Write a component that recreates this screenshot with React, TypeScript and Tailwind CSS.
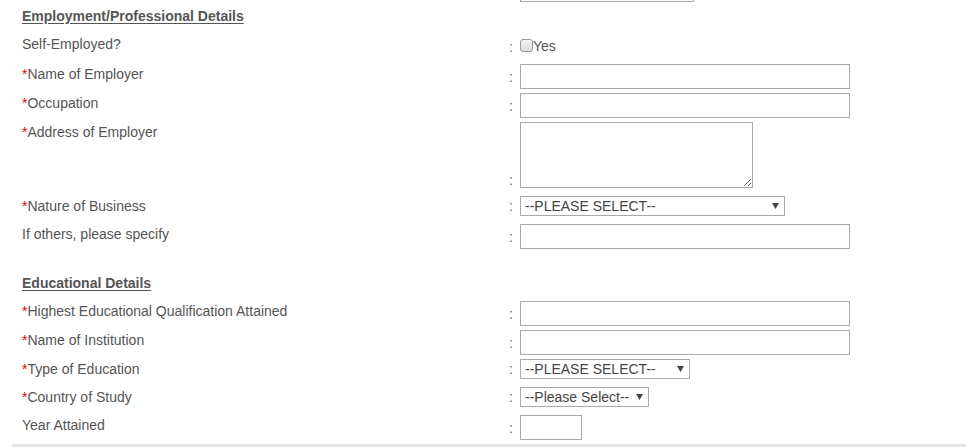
import React from "react"

const font = { fontFamily: '"Liberation Sans", Arial, sans-serif' }

function Label({ text, required }: { text: string; required?: boolean }) {
  return (
    <div className="w-[508px] shrink-0 pl-[22px] pt-[2px] leading-[16px]">
      {required && <span className="text-[#e60000]">*</span>}
      {text}
    </div>
  )
}

function Colon() {
  return <span className="w-[12px] shrink-0 pl-[1px] leading-[16px] text-[#666]">:</span>
}

function TextInput({ width }: { width: string }) {
  return (
    <input
      type="text"
      className={`${width} h-[25px] border border-[#a9a9a9] bg-white px-1 text-[14px] outline-none`}
    />
  )
}

function Select({ width, text }: { width: string; text: string }) {
  return (
    <div className={`relative ${width}`}>
      <select className="h-[20px] w-full appearance-none border border-[#a9a9a9] bg-white pl-[4px] text-[14px] leading-[18px] text-[#444] outline-none">
        <option>{text}</option>
      </select>
      <svg
        className="pointer-events-none absolute right-[6px] top-[7px]"
        width="7"
        height="6"
        viewBox="0 0 7 6"
      >
        <path d="M0 0 H7 L3.5 6 Z" fill="#444" />
      </svg>
    </div>
  )
}

function Row({
  label,
  required,
  children,
}: {
  label: string
  required?: boolean
  children: React.ReactNode
}) {
  return (
    <div className="flex py-[2px]">
      <Label text={label} required={required} />
      <div className="flex min-h-[24px] items-baseline">
        <Colon />
        {children}
      </div>
    </div>
  )
}

function Heading({ text }: { text: string }) {
  return (
    <div className="flex h-[30px] items-center pb-[2px] pl-[22px] font-bold text-[#555] underline underline-offset-2">
      {text}
    </div>
  )
}

export default function App() {
  return (
    <div style={font} className="w-[966px] h-[447px] overflow-hidden bg-white text-[14px] text-[#555]">
      {/* tail of the previous section's last field */}
      <div className="-mt-[23px] flex">
        <div className="w-[520px] shrink-0" />
        <TextInput width="w-[174px]" />
      </div>

      <Heading text="Employment/Professional Details" />

      <div className="flex py-[2px]">
        <Label text="Self-Employed?" />
        <div className="flex h-[26px] items-start">
          <span className="w-[12px] shrink-0 pl-[1px] pt-[5px] leading-[16px] text-[#666]">:</span>
          <label className="flex items-start">
            <input
              type="checkbox"
              className="m-0 mt-[5px] h-[13px] w-[13px] appearance-none rounded-[3px] border border-[#9a9a9a] bg-gradient-to-b from-[#f4f4f4] to-[#dcdcdc]"
            />
            <span className="pt-[4px] leading-[16px] text-[#555]">Yes</span>
          </label>
        </div>
      </div>

      <Row label="Name of Employer" required>
        <TextInput width="w-[330px]" />
      </Row>
      <Row label="Occupation" required>
        <TextInput width="w-[330px]" />
      </Row>

      <div className="flex py-[2px]">
        <Label text="Address of Employer" required />
        <div className="flex h-[70px] items-start">
          <div className="flex h-[66px] items-end">
            <Colon />
          </div>
          <textarea className="h-[66px] w-[233px] border border-[#a9a9a9] bg-white p-1 text-[14px] outline-none" />
        </div>
      </div>

      <Row label="Nature of Business" required>
        <Select width="w-[265px]" text="--PLEASE SELECT--" />
      </Row>
      <Row label="If others, please specify">
        <TextInput width="w-[330px]" />
      </Row>

      <div className="mt-[18px]">
        <Heading text="Educational Details" />
      </div>

      <Row label="Highest Educational Qualification Attained" required>
        <TextInput width="w-[330px]" />
      </Row>
      <Row label="Name of Institution" required>
        <TextInput width="w-[330px]" />
      </Row>
      <Row label="Type of Education" required>
        <Select width="w-[170px]" text="--PLEASE SELECT--" />
      </Row>
      <Row label="Country of Study" required>
        <Select width="w-[129px]" text="--Please Select--" />
      </Row>
      <Row label="Year Attained">
        <TextInput width="w-[62px]" />
      </Row>

      <div className="ml-[12px] mt-[2px] h-[4px] bg-[#e6e6e6]" />
    </div>
  )
}
